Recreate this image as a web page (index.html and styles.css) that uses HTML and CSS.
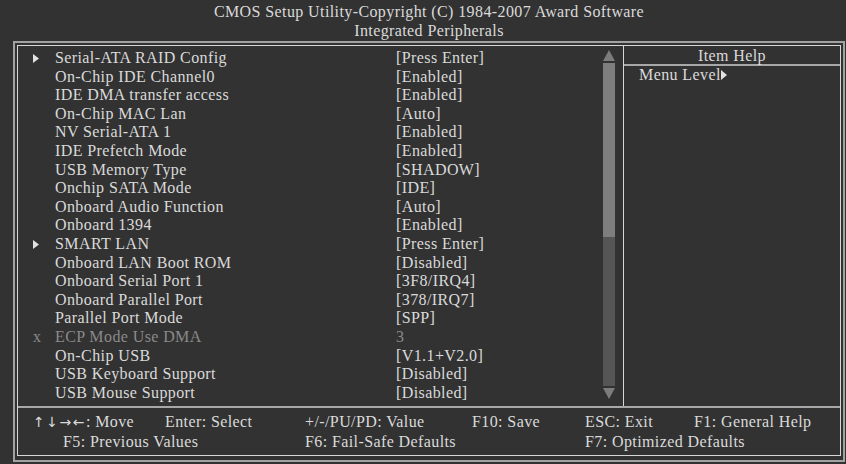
FILE: index.html
```html
<!DOCTYPE html>
<html>
<head>
    <title>CMOS Setup Utility - Integrated Peripherals</title>
    <link rel="stylesheet" href="styles.css">
</head>
<body>
    <div class="title">
        <div>CMOS Setup Utility-Copyright (C) 1984-2007 Award Software</div>
        <div>Integrated Peripherals</div>
    </div>

    <div class="frame">
        <div class="inner">
            <div class="main">
                <div class="list">
                    <ul class="items">
                        <li class="row"><span class="mark"><svg width="6" height="9" viewBox="0 0 6 9"><polygon points="0,0 6,4.5 0,9" fill="#e2e2e2"/></svg></span><span>Serial-ATA RAID Config</span><span>[Press Enter]</span></li>
                        <li class="row"><span class="mark"></span><span>On-Chip IDE Channel0</span><span>[Enabled]</span></li>
                        <li class="row"><span class="mark"></span><span>IDE DMA transfer access</span><span>[Enabled]</span></li>
                        <li class="row"><span class="mark"></span><span>On-Chip MAC Lan</span><span>[Auto]</span></li>
                        <li class="row"><span class="mark"></span><span>NV Serial-ATA 1</span><span>[Enabled]</span></li>
                        <li class="row"><span class="mark"></span><span>IDE Prefetch Mode</span><span>[Enabled]</span></li>
                        <li class="row"><span class="mark"></span><span>USB Memory Type</span><span>[SHADOW]</span></li>
                        <li class="row"><span class="mark"></span><span>Onchip SATA Mode</span><span>[IDE]</span></li>
                        <li class="row"><span class="mark"></span><span>Onboard Audio Function</span><span>[Auto]</span></li>
                        <li class="row"><span class="mark"></span><span>Onboard 1394</span><span>[Enabled]</span></li>
                        <li class="row"><span class="mark"><svg width="6" height="9" viewBox="0 0 6 9"><polygon points="0,0 6,4.5 0,9" fill="#e2e2e2"/></svg></span><span>SMART LAN</span><span>[Press Enter]</span></li>
                        <li class="row"><span class="mark"></span><span>Onboard LAN Boot ROM</span><span>[Disabled]</span></li>
                        <li class="row"><span class="mark"></span><span>Onboard Serial Port 1</span><span>[3F8/IRQ4]</span></li>
                        <li class="row"><span class="mark"></span><span>Onboard Parallel Port</span><span>[378/IRQ7]</span></li>
                        <li class="row"><span class="mark"></span><span>Parallel Port Mode</span><span>[SPP]</span></li>
                        <li class="row off"><span class="mark">x</span><span>ECP Mode Use DMA</span><span>3</span></li>
                        <li class="row"><span class="mark"></span><span>On-Chip USB</span><span>[V1.1+V2.0]</span></li>
                        <li class="row"><span class="mark"></span><span>USB Keyboard Support</span><span>[Disabled]</span></li>
                        <li class="row"><span class="mark"></span><span>USB Mouse Support</span><span>[Disabled]</span></li>
                    </ul>
                    <div class="scrollbar">
                        <svg class="arrow" width="12" height="11" viewBox="0 0 12 11"><polygon points="6,0 12,11 0,11" fill="#7c7c7c"/></svg>
                        <div class="track"><div class="thumb"></div></div>
                        <svg class="arrow" width="12" height="11" viewBox="0 0 12 11"><polygon points="0,0 12,0 6,11" fill="#7c7c7c"/></svg>
                    </div>
                </div>
                <div class="help">
                    <div class="help-title">Item Help</div>
                    <div class="help-body">Menu Level<svg width="6" height="10" viewBox="0 0 6 10"><polygon points="0,0 6,5 0,10" fill="#e2e2e2"/></svg></div>
                </div>
            </div>
            <div class="footer">
                <span><span class="keys">↑↓→←</span>: Move</span>
                <span>Enter: Select</span>
                <span>+/-/PU/PD: Value</span>
                <span>F10: Save</span>
                <span>ESC: Exit</span>
                <span>F1: General Help</span>
                <span class="f5">F5: Previous Values</span>
                <span class="wide">F6: Fail-Safe Defaults</span>
                <span class="wide">F7: Optimized Defaults</span>
            </div>
        </div>
    </div>
</body>
</html>
```

FILE: styles.css
```css
body {
    margin: 0;
    background-color: #323232;
    color: #dadada;
    font-family: "Liberation Serif", "Times New Roman", serif;
    font-size: 16px;
    letter-spacing: 0.4px;
}

.title {
    margin-left: 13px;
    width: 832px;
    height: 41px;
    padding-top: 2px;
    box-sizing: border-box;
    text-align: center;
    line-height: 19px;
}

.frame {
    margin-left: 13px;
    width: 832px;
    border: 2px solid #a2a2a2;
    padding: 2px 2px 4px;
    box-sizing: border-box;
}

.inner {
    border: 1px solid #d6d6d6;
}

.main {
    display: flex;
    height: 360px;
}

.list {
    flex: 1;
    display: flex;
    border-right: 1px solid #d6d6d6;
}

.items {
    flex: 1;
    list-style: none;
    margin: 0;
    padding: 3px 0 0 15px;
}

.row {
    display: grid;
    grid-template-columns: 22px 341px 1fr;
    line-height: 18.6px;
    white-space: nowrap;
}

.mark {
    display: flex;
    align-items: center;
}

.off {
    color: #8a8a8a;
}

.scrollbar {
    width: 12px;
    margin: 4px 8px 0 0;
    display: flex;
    flex-direction: column;
    height: 349px;
}

.arrow {
    display: block;
}

.track {
    flex: 1;
    margin: 2px 0;
    background-color: #555555;
}

.thumb {
    height: 174px;
    background-color: #7e7e7e;
}

.help {
    width: 216px;
}

.help-title {
    text-align: center;
    line-height: 16px;
    padding-top: 2px;
    border-bottom: 2px solid #a8a8a8;
}

.help-body {
    padding-left: 15px;
    line-height: 18.6px;
}

.footer {
    border-top: 2px solid #a8a8a8;
    padding: 4px 0 3px 15px;
    display: grid;
    grid-template-columns: 132px 140px 167px 113px 109px 1fr;
    line-height: 20px;
    white-space: nowrap;
}

.keys {
    font-family: "DejaVu Sans", sans-serif;
    font-size: 14px;
    letter-spacing: 1.5px;
}

.f5 {
    grid-column: span 2;
    padding-left: 30px;
}

.wide {
    grid-column: span 2;
}
```
